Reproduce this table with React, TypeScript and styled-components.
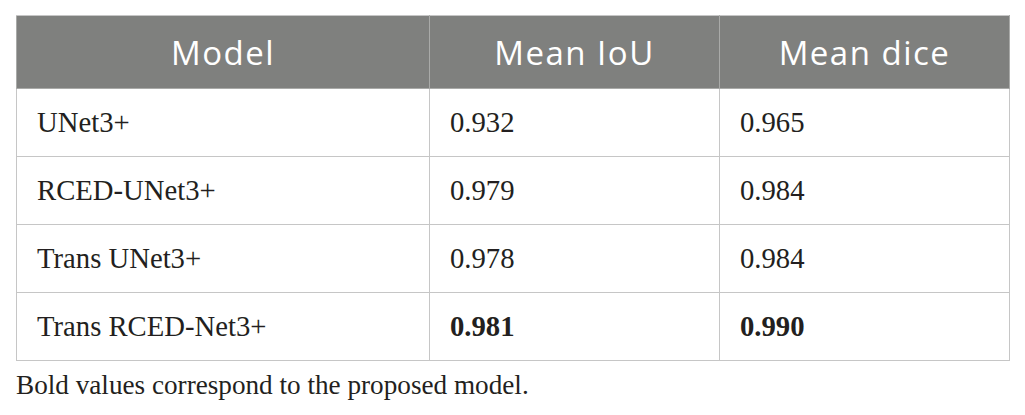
import React from "react";
import styled, { createGlobalStyle } from "styled-components";

const GlobalStyle = createGlobalStyle`
  html, body { margin: 0; padding: 0; background: #ffffff; }
  body { font-family: "Liberation Serif", "Times New Roman", serif; }
`;

const Page = styled.div`
  padding: 15px 18px 0 16px;
  width: 990px;
`;

const Table = styled.table`
  width: 990px;
  border-collapse: collapse;
  table-layout: fixed;
  border: 1px solid #c6c6c6;
`;

const HeadCell = styled.th<{ $w: number }>`
  width: ${(p) => p.$w}px;
  height: 72px;
  padding: 0;
  background: #7f807e;
  color: #ffffff;
  font-family: "Open Sans", "Liberation Sans", sans-serif;
  font-weight: 400;
  font-size: 33px;
  letter-spacing: 1.5px;
  text-align: center;
  vertical-align: middle;
  border: 1px solid #a9aaa8;
  border-top-color: #c6c6c6;
`;

const Cell = styled.td<{ $bold?: boolean }>`
  height: 67px;
  padding: 0 0 0 20px;
  font-family: "Liberation Serif", "Times New Roman", serif;
  font-size: 28.7px;
  font-weight: ${(p) => (p.$bold ? 700 : 400)};
  color: #231f20;
  vertical-align: middle;
  border: 1px solid #c6c6c6;
`;

const Caption = styled.p`
  margin: 9px 0 0 0;
  font-family: "Liberation Serif", "Times New Roman", serif;
  font-size: 27.2px;
  color: #231f20;
`;

type Row = { model: string; iou: string; dice: string; bold?: boolean };

const rows: Row[] = [
  { model: "UNet3+", iou: "0.932", dice: "0.965" },
  { model: "RCED-UNet3+", iou: "0.979", dice: "0.984" },
  { model: "Trans UNet3+", iou: "0.978", dice: "0.984" },
  { model: "Trans RCED-Net3+", iou: "0.981", dice: "0.990", bold: true },
];

export default function App() {
  return (
    <>
      <GlobalStyle />
      <Page>
        <Table>
          <thead>
            <tr>
              <HeadCell $w={412}>Model</HeadCell>
              <HeadCell $w={289}>Mean IoU</HeadCell>
              <HeadCell $w={289}>Mean dice</HeadCell>
            </tr>
          </thead>
          <tbody>
            {rows.map((r) => (
              <tr key={r.model}>
                <Cell>{r.model}</Cell>
                <Cell $bold={r.bold}>{r.iou}</Cell>
                <Cell $bold={r.bold}>{r.dice}</Cell>
              </tr>
            ))}
          </tbody>
        </Table>
        <Caption>Bold values correspond to the proposed model.</Caption>
      </Page>
    </>
  );
}
